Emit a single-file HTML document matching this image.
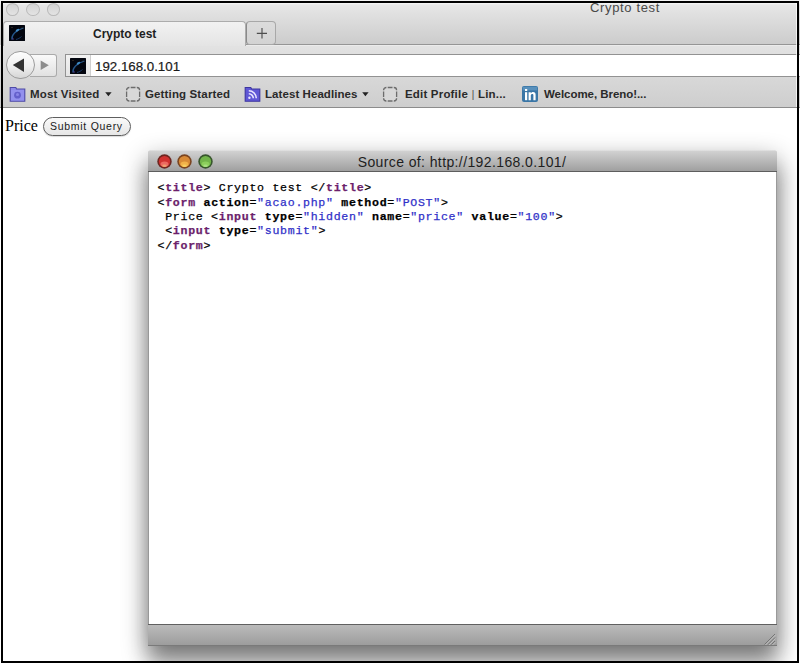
<!DOCTYPE html>
<html><head><meta charset="utf-8">
<style>
*{box-sizing:border-box;}
html,body{margin:0;padding:0;}
body{width:800px;height:663px;overflow:hidden;position:relative;background:#fff;font-family:"Liberation Sans",sans-serif;}
div,svg{position:absolute;}
#chrome{left:0;top:0;width:800px;height:45px;background:linear-gradient(#f2f2f2 0,#f2f2f2 3.5px,#e6e6e6 5px,#cccccc 44px);}
#toolbar{left:0;top:45px;width:800px;height:63px;background:linear-gradient(#f0f0f0,#e2e2e2 1.5px,#cecece);border-bottom:1px solid #8c8c8c;}
#tabline{left:246px;top:44px;width:554px;height:1px;background:#959595;}
.tl{top:2.5px;width:13.5px;height:13px;border-radius:50%;background:linear-gradient(#d3d3d3,#e3e3e3);border:1px solid #b9b9b9;}
#wtitle{left:590px;top:0px;font-size:13px;letter-spacing:0.65px;color:#4a4a4a;}
#tab{left:3px;top:21px;width:243px;height:25px;border:1px solid #acacac;border-bottom:none;border-radius:4px 4px 0 0;background:linear-gradient(#f2f2f2,#e4e4e4);}
#tabtext{left:93px;top:26.5px;font-size:12px;font-weight:bold;color:#1f1f1f;}
#plus{left:246px;top:21px;width:30px;height:24px;border:1px solid #a8a8a8;border-left-color:#8a8a8a;border-radius:4px;background:linear-gradient(#dcdcdc,#d3d3d3);}
#back{left:6px;top:50.5px;width:28.5px;height:28.5px;border-radius:50%;border:1.2px solid #9c9c9c;background:linear-gradient(#fdfdfd,#efefef 55%,#d6d6d6);}
#fwd{left:30px;top:54px;width:27px;height:22.5px;border:1px solid #aaaaaa;border-left:none;border-radius:0 3px 3px 0;background:linear-gradient(#fafafa,#e1e1e1);}
#url{left:65px;top:54px;width:740px;height:23px;border:1px solid #929292;border-right:none;background:#fff;}
#urlfav{left:0;top:0;width:25px;height:21px;background:linear-gradient(#f2f2f2,#e5e5e5);border-right:1px solid #cfcfcf;}
#urltext{left:95px;top:58.5px;font-size:13.3px;color:#1a1a1a;-webkit-text-stroke:0.2px #1a1a1a;}
.bm{top:87.5px;font-size:11.5px;font-weight:bold;color:#2a2a2a;}
#price{left:5px;top:116.5px;font-family:"Liberation Serif",serif;font-size:16px;color:#000;}
#submit{left:43px;top:117px;width:88px;height:19px;border:1px solid #5e5e5e;border-radius:10px;background:linear-gradient(#fafafa,#e6e6e6);box-shadow:0 1px 1px rgba(0,0,0,0.15);}
#submittext{left:50px;top:120px;font-size:10.5px;letter-spacing:0.72px;color:#1a1a1a;}
#shadow{left:148px;top:150px;width:629px;height:496px;box-shadow:0 10px 26px rgba(0,0,0,0.46),0 20px 20px rgba(0,0,0,0.22);border-radius:2px 2px 0 0;}
#win{left:148px;top:149.5px;width:629px;height:496.5px;background:#fff;overflow:hidden;border-radius:2px 2px 0 0;}
#wtbar{left:0;top:0;width:629px;height:22.5px;background:linear-gradient(#e6e6e6 0,#d0d0d0 1.5px,#9f9f9f);border-bottom:1px solid #5e5e5e;}
#wsrc{left:-0.5px;top:4.3px;width:629px;text-align:center;font-size:14px;letter-spacing:0.39px;color:#1e1e1e;}
#code{left:9.5px;top:31.7px;font-family:"Liberation Mono",monospace;font-size:11.6px;letter-spacing:0.7px;line-height:14.35px;white-space:pre;color:#000;}
#code{-webkit-text-stroke:0.25px;}
#code b.t{color:#6c1f6c;}
#code b.a{color:#000;}
#code span.v{color:#3030c8;}
#status{left:0;top:474.5px;width:629px;height:22px;border-top:1px solid #606060;border-bottom:1px solid #7a7a7a;background:linear-gradient(#bbbbbb,#9d9d9d);}
#wedge{left:148px;top:172px;width:629px;height:452px;border-left:1px solid #989898;border-right:1px solid #9a9a9a;}
#border{left:1px;top:1px;width:798px;height:662px;border:2px solid #000;}
</style></head><body>
<div id="chrome"></div>
<div class="tl" style="left:5.7px"></div>
<div class="tl" style="left:26px"></div>
<div class="tl" style="left:46.8px"></div>
<div id="wtitle">Crypto test</div>
<div id="toolbar"></div>
<div id="tabline"></div>
<div id="tab"></div>
<svg style="left:9px;top:25px" width="16" height="16" viewBox="0 0 16 16"><rect width="16" height="16" rx="0.5" fill="#03060f"/><path d="M14.5 3 C11 4 8 5.5 5.5 8 C3.5 10 2.5 12 3 14.5" stroke="#2a64a0" stroke-width="1.3" fill="none" opacity="0.85"/><ellipse cx="8.5" cy="5.2" rx="2" ry="1.1" transform="rotate(-35 8.5 5.2)" fill="#3f8ac4"/><circle cx="3" cy="2.5" r="0.5" fill="#6a5a40"/><circle cx="13" cy="3" r="0.5" fill="#5a5040"/><circle cx="4" cy="14" r="0.8" fill="#6a4ab0" opacity="0.8"/><path d="M7 14.5 C9 14 11 13 12.5 11.5" stroke="#1d3f70" stroke-width="0.9" fill="none"/></svg>
<div id="tabtext">Crypto test</div>
<div id="plus"></div>
<svg style="left:256px;top:27px" width="12" height="12" viewBox="0 0 12 12"><path d="M0.8 6.4H11M6 0.9V11.6" stroke="#4e4e4e" stroke-width="1.15"/></svg>
<div id="fwd"></div>
<div id="back"></div>
<svg style="left:12px;top:58px" width="13" height="15" viewBox="0 0 13 15"><path d="M0.8 7.1L12 0.5V14.1Z" fill="#333"/></svg>
<svg style="left:40px;top:60px" width="10" height="11" viewBox="0 0 10 11"><path d="M0.7 0.6L8.8 5.3L0.7 10Z" fill="#8c8c8c"/></svg>
<div id="url"><div id="urlfav"></div></div>
<svg style="left:70px;top:57.5px" width="16" height="16" viewBox="0 0 16 16"><rect width="16" height="16" rx="0.5" fill="#03060f"/><path d="M14.5 3 C11 4 8 5.5 5.5 8 C3.5 10 2.5 12 3 14.5" stroke="#2a64a0" stroke-width="1.3" fill="none" opacity="0.85"/><ellipse cx="8.5" cy="5.2" rx="2" ry="1.1" transform="rotate(-35 8.5 5.2)" fill="#3f8ac4"/><circle cx="3" cy="2.5" r="0.5" fill="#6a5a40"/><circle cx="13" cy="3" r="0.5" fill="#5a5040"/><circle cx="4" cy="14" r="0.8" fill="#6a4ab0" opacity="0.8"/><path d="M7 14.5 C9 14 11 13 12.5 11.5" stroke="#1d3f70" stroke-width="0.9" fill="none"/></svg>
<div id="urltext">192.168.0.101</div>
<svg style="left:9px;top:86px" width="17" height="16" viewBox="0 0 17 16"><path d="M1.2 1.5H6.8L7.6 3H15.8V15.3H1.2Z" fill="#8d8aea" stroke="#4e4aa6" stroke-width="1.1"/><path d="M2 4H15V14.5H2Z" fill="#9896f0" opacity="0.6"/><circle cx="8.5" cy="9.2" r="3.4" fill="#6460cc"/><circle cx="8.5" cy="8.5" r="1.5" fill="#8a86e8"/></svg>
<div class="bm" style="left:30px;letter-spacing:0.16px">Most Visited</div>
<svg style="left:104.5px;top:91.5px" width="7" height="5" viewBox="0 0 7 5"><path d="M0.2 0.3H6.6L3.4 4.3Z" fill="#222"/></svg>
<svg style="left:125px;top:86px" width="16" height="16" viewBox="0 0 16 16"><rect x="1.6" y="1.5" width="13" height="13.5" rx="2.5" fill="#d8d8d8"/><path d="M1.6 4.3A2.8 2.8 0 0 1 4.4 1.5M5.7 1.5H10.5M11.8 1.5A2.8 2.8 0 0 1 14.6 4.3M14.6 5.6V10.9M14.6 12.2A2.8 2.8 0 0 1 11.8 15M10.5 15H5.7M4.4 15A2.8 2.8 0 0 1 1.6 12.2M1.6 10.9V5.6" fill="none" stroke="#6c6c6c" stroke-width="1.3"/></svg>
<div class="bm" style="left:145px;letter-spacing:0.14px">Getting Started</div>
<svg style="left:243.5px;top:86px" width="17" height="16" viewBox="0 0 17 16"><path d="M1.2 1.5H6.8L7.6 3H15.8V15.3H1.2Z" fill="#5f57d6" stroke="#3d36a0" stroke-width="1.1"/><path d="M4.8 4.8A7.5 7.5 0 0 1 12.3 12.3M4.8 7.8A4.5 4.5 0 0 1 9.3 12.3" stroke="#e8e6ff" stroke-width="1.6" fill="none"/><circle cx="5.4" cy="11.8" r="1.2" fill="#e8e6ff"/></svg>
<div class="bm" style="left:265px;letter-spacing:0.07px">Latest Headlines</div>
<svg style="left:362px;top:91.5px" width="7" height="5" viewBox="0 0 7 5"><path d="M0.2 0.3H6.6L3.4 4.3Z" fill="#222"/></svg>
<svg style="left:382px;top:86px" width="16" height="16" viewBox="0 0 16 16"><rect x="1.6" y="1.5" width="13" height="13.5" rx="2.5" fill="#d8d8d8"/><path d="M1.6 4.3A2.8 2.8 0 0 1 4.4 1.5M5.7 1.5H10.5M11.8 1.5A2.8 2.8 0 0 1 14.6 4.3M14.6 5.6V10.9M14.6 12.2A2.8 2.8 0 0 1 11.8 15M10.5 15H5.7M4.4 15A2.8 2.8 0 0 1 1.6 12.2M1.6 10.9V5.6" fill="none" stroke="#6c6c6c" stroke-width="1.3"/></svg>
<div class="bm" style="left:405px;letter-spacing:0.19px">Edit Profile <span style="font-weight:normal;color:#555">|</span> Lin...</div>
<svg style="left:522px;top:86px" width="16" height="16" viewBox="0 0 16 16"><rect x="0" y="0" width="16" height="16" rx="2" fill="#3a76a6"/><rect x="0.8" y="0.8" width="14.4" height="3.6" fill="#5890bc"/><rect x="3" y="3" width="2.2" height="2" fill="#fff"/><rect x="3" y="6.2" width="2.2" height="8" fill="#fff"/><path d="M6.6 6.2H8.8V7.3C9.4 6.4 10.3 6 11.2 6C12.8 6 13.6 7 13.6 8.8V14.2H11.4V9.3C11.4 8.4 11 8 10.3 8C9.5 8 8.8 8.6 8.8 9.6V14.2H6.6Z" fill="#fff"/></svg>
<div class="bm" style="left:544px;letter-spacing:-0.05px">Welcome, Breno!...</div>
<div id="price">Price</div>
<div id="submit"></div>
<div id="submittext">Submit Query</div>
<div id="shadow"></div>
<div id="win">
  <div id="wtbar"></div>
  <svg style="left:8.5px;top:4px" width="15" height="15" viewBox="0 0 15 15"><circle cx="7.5" cy="7.5" r="7.2" fill="#6e2620"/><circle cx="7.5" cy="7.5" r="5.6" fill="#d03230"/><ellipse cx="7.5" cy="10" rx="4" ry="2.6" fill="#ec6a62"/><ellipse cx="7.5" cy="11.8" rx="2.2" ry="1.2" fill="#f0a070"/></svg>
  <svg style="left:29px;top:4px" width="15" height="15" viewBox="0 0 15 15"><circle cx="7.5" cy="7.5" r="7.2" fill="#7a4420"/><circle cx="7.5" cy="7.5" r="5.6" fill="#d88a36"/><ellipse cx="7.5" cy="10" rx="4" ry="2.6" fill="#f2b24a"/><ellipse cx="7.5" cy="11.8" rx="2.2" ry="1.2" fill="#f8d060"/></svg>
  <svg style="left:50px;top:4px" width="15" height="15" viewBox="0 0 15 15"><circle cx="7.5" cy="7.5" r="7.2" fill="#37552c"/><circle cx="7.5" cy="7.5" r="5.6" fill="#72b44a"/><ellipse cx="7.5" cy="10" rx="4" ry="2.6" fill="#8ccf5c"/><ellipse cx="7.5" cy="11.8" rx="2.2" ry="1.2" fill="#a8e080"/></svg>
  <div id="wsrc">Source of: http://192.168.0.101/</div>
  <div id="code">&lt;<b class="t">title</b>&gt; Crypto test &lt;/<b class="t">title</b>&gt;
&lt;<b class="t">form</b> <b class="a">action</b>=<span class="v">"acao.php"</span> <b class="a">method</b>=<span class="v">"POST"</span>&gt;
 Price &lt;<b class="t">input</b> <b class="a">type</b>=<span class="v">"hidden"</span> <b class="a">name</b>=<span class="v">"price"</span> <b class="a">value</b>=<span class="v">"100"</span>&gt;
 &lt;<b class="t">input</b> <b class="a">type</b>=<span class="v">"submit"</span>&gt;
&lt;/<b class="t">form</b>&gt;</div>
  <div id="status"></div>
  <svg style="left:614px;top:480px" width="14" height="16" viewBox="0 0 14 16"><path d="M2.5 14.5L13 4M6 14.5L13 7.5M9.5 14.5L13 11" stroke="#6e6e6e" stroke-width="0.9"/><path d="M3.5 15L13.5 5M7 15L13.5 8.5M10.5 15L13.5 12" stroke="#c8c8c8" stroke-width="0.7"/></svg>
</div>
<div id="wedge"></div>
<div style="left:796px;top:3px;width:1px;height:104px;background:rgba(255,255,255,0.7)"></div>
<div id="border"></div>
</body></html>
